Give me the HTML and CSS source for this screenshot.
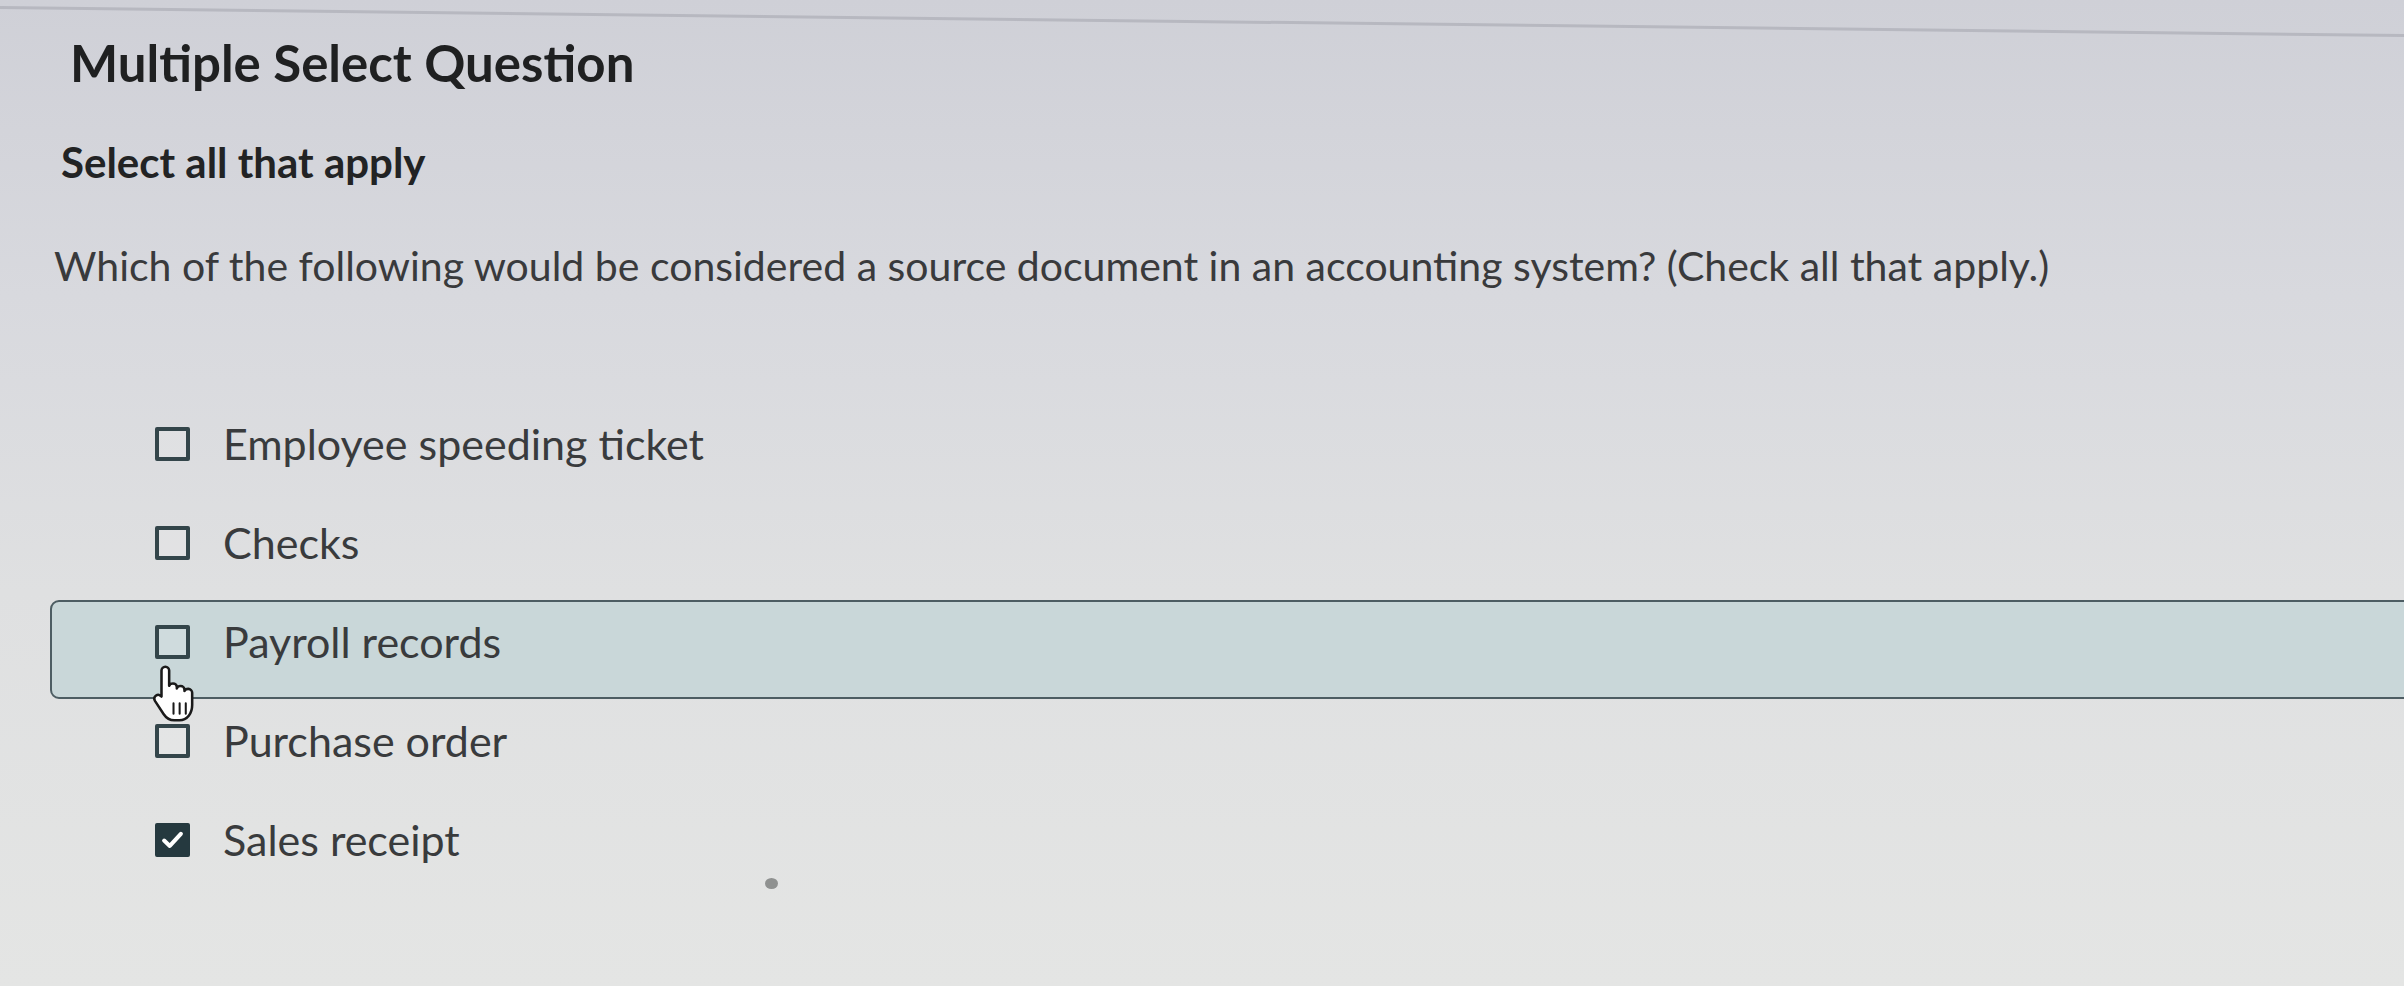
FILE: index.html
```html
<!DOCTYPE html>
<html lang="en">
<head>
<meta charset="utf-8">
<title>Multiple Select Question</title>
<link rel="stylesheet" href="styles.css">
</head>
<body>
<div class="screen">
  <div class="top-rule"></div>
  <h1 class="title">Multiple Select Question</h1>
  <h2 class="subtitle">Select all that apply</h2>
  <p class="question">Which of the following would be considered a source document in an accounting system? (Check all that apply.)</p>
  <ul class="options">
    <li class="option"><span class="box"></span><span class="label">Employee speeding ticket</span></li>
    <li class="option"><span class="box"></span><span class="label">Checks</span></li>
    <li class="option hover"><span class="box"></span><span class="label">Payroll records</span>
      <svg class="cursor" viewBox="0 0 18 23" width="46" height="59" aria-hidden="true">
        <path d="M6 1C6.8 1 7.5 1.7 7.5 2.5L7.5 8.5C7.7 7.9 8.3 7.6 9 7.6C9.8 7.6 10.5 8.2 10.5 9L10.5 9.5C10.7 8.9 11.3 8.6 12 8.6C12.8 8.6 13.5 9.2 13.5 10L13.5 10.5C13.7 10 14.3 9.7 15 9.7C15.8 9.7 16.5 10.4 16.5 11.2L16.5 16C16.5 19.2 14.6 22 11.5 22L9.5 22C7.5 22 6.3 21 5.3 19.5L2 14.5C1.5 13.7 1.7 12.8 2.4 12.3C3.1 11.8 4 12 4.5 12.7L4.5 2.5C4.5 1.7 5.2 1 6 1Z" fill="#ffffff" stroke="#1a1a1a" stroke-width="1" stroke-linejoin="round"/>
        <path d="M9.2 15.3V19.4M11.6 15.3V19.4M14 15.3V19.4" stroke="#1a1a1a" stroke-width="0.8" stroke-linecap="round"/>
      </svg>
    </li>
    <li class="option"><span class="box"></span><span class="label">Purchase order</span></li>
    <li class="option"><span class="box checked"><svg viewBox="0 0 20 20" width="32" height="32" aria-hidden="true"><path d="M3.8 10.4L8 14.4L16.2 5.4" fill="none" stroke="#ffffff" stroke-width="3" stroke-linecap="round" stroke-linejoin="round"/></svg></span><span class="label">Sales receipt</span></li>
  </ul>
  <span class="speck"></span>
</div>
</body>
</html>
```

FILE: styles.css
```css
html, body {
  margin: 0;
  padding: 0;
  height: 100%;
  overflow: hidden;
}

body {
  background: linear-gradient(180deg, #cfd0d7 0%, #d8d9de 30%, #dfe0e1 60%, #e4e5e4 100%);
  font-family: "Lato", "Liberation Sans", sans-serif;
  color: #363839;
}

.screen {
  position: relative;
  height: 986px;
  padding-top: 1px;
  box-sizing: border-box;
}

.top-rule {
  height: 0;
  border-top: 3px solid #b7b8c0;
  margin-top: 5px;
  transform: rotate(0.67deg);
  transform-origin: 0 0;
  width: 2460px;
}

.title {
  margin: 28px 0 0 70px;
  font-size: 51px;
  line-height: 51px;
  font-weight: 700;
  color: #1f2021;
}

.subtitle {
  margin: 53px 0 0 61px;
  font-size: 42px;
  line-height: 42px;
  font-weight: 700;
  color: #222324;
}

.question {
  margin: 62px 0 0 54px;
  font-size: 41px;
  line-height: 41px;
  font-weight: 400;
  color: #393a3c;
}

.options {
  list-style: none;
  margin: 116px -30px 0 50px;
  padding: 0;
  display: flex;
  flex-direction: column;
}

.option {
  position: relative;
  height: 99px;
  box-sizing: border-box;
  display: flex;
  align-items: center;
  gap: 33px;
  padding: 0 0 16px 103px;
  border: 2px solid transparent;
  border-radius: 9px;
}

.option.hover {
  background: #c9d7d9;
  border-color: #4d5d63;
}

.box {
  flex: none;
  width: 35px;
  height: 34px;
  box-sizing: border-box;
  border: 4px solid #33454a;
  border-radius: 2px;
  background: rgba(255, 255, 255, 0.12);
  display: flex;
  align-items: center;
  justify-content: center;
}

.box.checked {
  background: #25393f;
  border-color: #25393f;
}

.label {
  font-size: 43px;
  line-height: 43px;
  color: #393b3d;
}

.cursor {
  position: absolute;
  left: 98px;
  top: 62px;
}

.speck {
  position: absolute;
  left: 765px;
  top: 878px;
  width: 13px;
  height: 11px;
  border-radius: 50%;
  background: #8f9190;
}
```
